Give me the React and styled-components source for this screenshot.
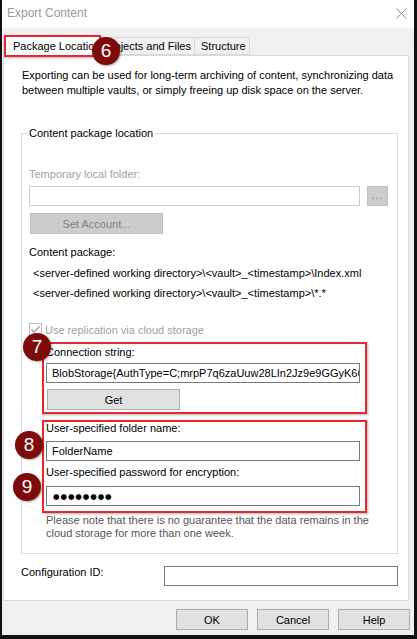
import React from "react";
import styled, { createGlobalStyle } from "styled-components";

const GlobalStyle = createGlobalStyle`
  html, body {
    margin: 0;
    padding: 0;
    background: #fff;
  }
  body {
    font-family: "Liberation Sans", Arial, sans-serif;
    font-size: 11px;
    color: #000;
  }
  * {
    box-sizing: border-box;
  }
`;

const Window = styled.div`
  width: 417px;
  height: 639px;
  background: #f0f0f0;
  border-left: 2px solid #111;
  border-right: 3px solid #111;
  border-bottom: 4px solid #111;
  display: flex;
  flex-direction: column;
`;

const TitleBar = styled.div`
  height: 28px;
  flex: none;
  background: #fff;
  display: flex;
  align-items: center;
  justify-content: space-between;
  padding: 0 7px 2px 5px;
  font-size: 12px;
  color: #999;
`;

const TabStrip = styled.div`
  flex: none;
  height: 20px;
  margin-top: 7px;
  padding-left: 1px;
  display: flex;
  align-items: flex-end;
  position: relative;
  z-index: 2;
`;

const Tab = styled.div`
  position: relative;
  width: ${(p) => p.$width}px;
  height: ${(p) => (p.$active ? 21 : 18)}px;
  margin-bottom: ${(p) => (p.$active ? -1 : 0)}px;
  margin-left: ${(p) => (p.$first ? 0 : -1)}px;
  padding-left: ${(p) => (p.$active ? 9 : 6)}px;
  background: ${(p) => (p.$active ? "#fff" : "#f0f0f0")};
  border: 1px solid #d9d9d9;
  border-bottom: ${(p) => (p.$active ? "none" : "1px solid #d9d9d9")};
  display: flex;
  align-items: center;
  white-space: nowrap;
  z-index: ${(p) => (p.$active ? 2 : 1)};
`;

const TabHighlight = styled.div`
  position: absolute;
  left: 0;
  top: -1px;
  right: -2px;
  bottom: -1px;
  border: 2px solid #e8262b;
  box-shadow: 1px 1px 2px rgba(0, 0, 0, 0.3);
`;

const Badge = styled.div`
  position: absolute;
  left: ${(p) => p.$x}px;
  top: ${(p) => p.$y}px;
  width: 28px;
  height: 28px;
  border-radius: 50%;
  background: #7d0b0b;
  box-shadow: 1px 1px 2px rgba(0, 0, 0, 0.35);
  color: #fff;
  font-size: 19px;
  display: flex;
  align-items: center;
  justify-content: center;
  z-index: 5;
`;

const Panel = styled.div`
  flex: none;
  height: 546px;
  margin: 0 5px 0 1px;
  background: #fff;
  border: 1px solid #d9d9d9;
  padding: 12px 0 0 17px;
  position: relative;
  z-index: 1;
`;

const Intro = styled.div`
  margin-left: 1px;
  line-height: 15px;
  color: #000;
`;

const GroupBox = styled.fieldset`
  margin: 28px 0 0 0;
  width: 377px;
  min-width: 0;
  border: 1px solid #dcdcdc;
  padding: 0 0 13px 7px;
`;

const Legend = styled.legend`
  margin-left: -2px;
  padding: 0 2px;
  line-height: 15px;
`;

const Label = styled.div`
  margin-top: ${(p) => p.$mt || 0}px;
  line-height: ${(p) => p.$lh || 15}px;
  color: ${(p) => (p.$disabled ? "#a0a0a0" : "#000")};
`;

const PathLine = styled.div`
  padding-left: 4px;
  line-height: 20px;
  white-space: nowrap;
`;

const FieldRow = styled.div`
  display: flex;
  margin-top: ${(p) => p.$mt || 0}px;
`;

const Field = styled.div`
  width: ${(p) => p.$width}px;
  height: 20px;
  margin-top: ${(p) => p.$mt || 0}px;
  border: 1px solid ${(p) => (p.$disabled ? "#cccccc" : "#7a7a7a")};
  background: #fff;
  padding-left: 5px;
  display: flex;
  align-items: center;
  white-space: nowrap;
  overflow: hidden;
`;

const Dots = styled.span`
  font-family: "DejaVu Sans", sans-serif;
  font-size: 7.5px;
  letter-spacing: 0.9px;
  padding-left: 1px;
`;

const Button = styled.div`
  width: ${(p) => p.$width}px;
  height: 21px;
  margin-top: ${(p) => p.$mt || 0}px;
  margin-left: ${(p) => p.$ml || 0}px;
  border: 1px solid ${(p) => (p.$disabled ? "#bfbfbf" : "#adadad")};
  background: ${(p) => (p.$disabled ? "#cccccc" : "#e1e1e1")};
  color: ${(p) => (p.$disabled ? "#838383" : "#000")};
  display: flex;
  align-items: center;
  justify-content: center;
  flex: none;
`;

const BrowseButton = styled(Button)`
  height: 20px;
  color: #8a80a8;
  letter-spacing: 1px;
  padding-bottom: 2px;
`;

const CheckRow = styled.div`
  margin-top: 19px;
  height: 15px;
  display: flex;
  align-items: center;
  gap: 3px;
  color: #a0a0a0;
`;

const Highlight = styled.div`
  position: relative;
  width: 325px;
  margin: ${(p) => p.$mt}px 0 0 13px;
  border: 2px solid #e8262b;
  box-shadow: 1px 1px 2px rgba(0, 0, 0, 0.3);
  padding: ${(p) => p.$pt}px 0 ${(p) => p.$pb}px 2px;
`;

const Note = styled.div`
  margin: 1px 0 0 17px;
  line-height: 13px;
  color: #555;
`;

const ConfigRow = styled.div`
  margin-top: 12px;
  display: flex;
  align-items: flex-start;
`;

const ConfigLabel = styled.div`
  width: 143px;
  line-height: 13px;
`;

const Footer = styled.div`
  flex: 1;
  display: flex;
  justify-content: flex-end;
  align-items: flex-start;
  gap: 9px;
  padding: 8px 4px 0 0;
`;

function CloseIcon() {
  return (
    <svg width="11" height="11" viewBox="0 0 11 11">
      <path d="M0.5 0.5 L10.5 10.5 M10.5 0.5 L0.5 10.5" stroke="#8c8c8c" strokeWidth="1" />
    </svg>
  );
}

function DisabledCheck() {
  return (
    <svg width="13" height="13" viewBox="0 0 13 13">
      <rect x="0.5" y="0.5" width="12" height="12" fill="#fff" stroke="#bcbcbc" />
      <path d="M2.5 6.5 L5 9 L10.5 3.5" fill="none" stroke="#a6a6a6" strokeWidth="1.6" />
    </svg>
  );
}

export default function App() {
  return (
    <>
      <GlobalStyle />
      <Window>
        <TitleBar>
          <span>Export Content</span>
          <CloseIcon />
        </TitleBar>

        <TabStrip>
          <Tab $active $first $width={97}>
            Package Location
            <TabHighlight />
            <Badge $x={88} $y={1}>6</Badge>
          </Tab>
          <Tab $width={96}>Objects and Files</Tab>
          <Tab $width={56}>Structure</Tab>
        </TabStrip>

        <Panel>
          <Intro>
            Exporting can be used for long-term archiving of content, synchronizing data
            <br />
            between multiple vaults, or simply freeing up disk space on the server.
          </Intro>

          <GroupBox>
            <Legend>Content package location</Legend>

            <Label $mt={26} $disabled>Temporary local folder:</Label>
            <FieldRow $mt={4}>
              <Field $width={331} $disabled />
              <BrowseButton $width={21} $ml={7} $disabled>...</BrowseButton>
            </FieldRow>
            <Button $width={133} $mt={7} $ml={1} $disabled>Set Account...</Button>

            <Label $mt={11}>Content package:</Label>
            <div style={{ marginTop: 3 }}>
              <PathLine>&lt;server-defined working directory&gt;\&lt;vault&gt;_&lt;timestamp&gt;\Index.xml</PathLine>
              <PathLine>&lt;server-defined working directory&gt;\&lt;vault&gt;_&lt;timestamp&gt;\*.*</PathLine>
            </div>

            <CheckRow>
              <DisabledCheck />
              Use replication via cloud storage
            </CheckRow>

            <Highlight $mt={5} $pt={1} $pb={2}>
              <Badge $x={-21} $y={-11}>7</Badge>
              <Label>Connection string:</Label>
              <Field $width={314} $mt={3}>
                BlobStorage{"{"}AuthType=C;mrpP7q6zaUuw28LIn2Jz9e9GGyK66c
              </Field>
              <Button $width={133} $mt={6} $ml={1}>Get</Button>
            </Highlight>

            <Highlight $mt={6} $pt={0} $pb={5}>
              <Badge $x={-29} $y={9}>8</Badge>
              <Badge $x={-31} $y={51}>9</Badge>
              <Label $lh={13}>User-specified folder name:</Label>
              <Field $width={314} $mt={6}>FolderName</Field>
              <Label $lh={13} $mt={5}>User-specified password for encryption:</Label>
              <Field $width={314} $mt={7}>
                <Dots>●●●●●●●●</Dots>
              </Field>
            </Highlight>

            <Note>
              Please note that there is no guarantee that the data remains in the
              <br />
              cloud storage for more than one week.
            </Note>
          </GroupBox>

          <ConfigRow>
            <ConfigLabel>Configuration ID:</ConfigLabel>
            <Field $width={234} />
          </ConfigRow>
        </Panel>

        <Footer>
          <Button $width={72}>OK</Button>
          <Button $width={72}>Cancel</Button>
          <Button $width={72}>Help</Button>
        </Footer>
      </Window>
    </>
  );
}
